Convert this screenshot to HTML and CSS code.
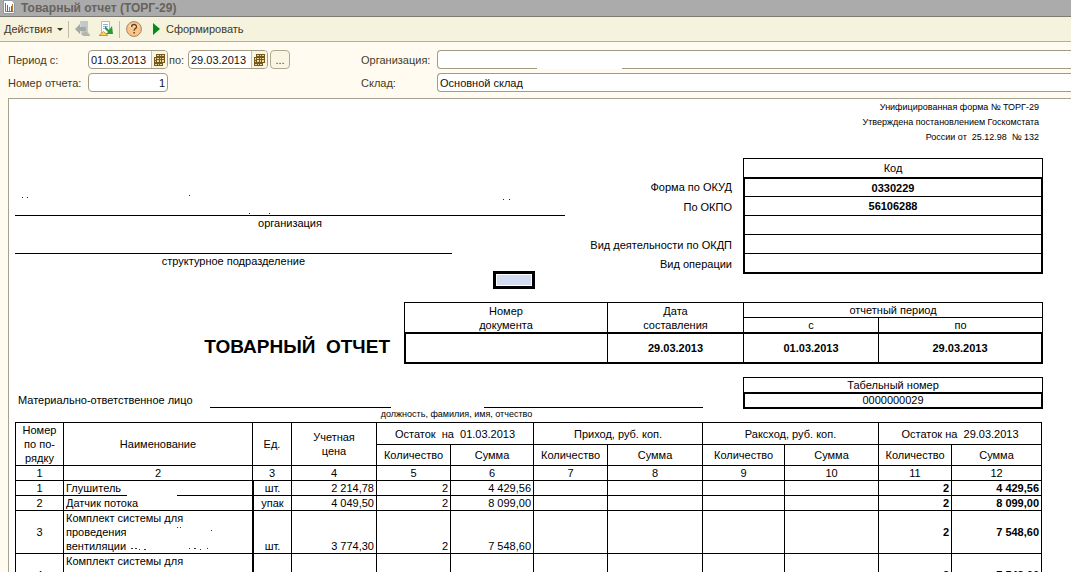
FILE: index.html
```html
<!DOCTYPE html>
<html lang="ru">
<head>
<meta charset="utf-8">
<title>Товарный отчет (ТОРГ-29)</title>
<link rel="stylesheet" href="styles.css">
</head>
<body>
<header class="titlebar">
  <svg class="title-icon" width="14" height="16" viewBox="0 0 14 16" aria-hidden="true">
    <path d="M1.500 0v13.500h11V3L10 .5H1.500" fill="#fdfdfd" stroke="#8d99a8"/>
    <path d="M3.500 3v8.500h8" fill="none" stroke="#6b7480"/>
    <path d="M5.500 5v6M9.500 6v5" stroke="#c8432b"/>
    <path d="M7.500 7v4M10.500 4v7" stroke="#b07a35"/>
  </svg>
  <h1 class="title">Товарный отчет (ТОРГ-29)</h1>
</header>
<nav class="toolbar">
  <button class="tool menu" type="button">Действия<span class="caret"></span></button>
  <span class="divider"></span>
  <button class="tool icon" type="button" aria-label="Загрузить">
    <svg width="16" height="16" viewBox="0 0 16 16"><path d="M5 0h8v11l2 3H6z" fill="#c3c9c8"/><path d="M0 8l5-5v3h6v4H5v3z" fill="#a2a9a7"/><path d="M7 13l3-3 5 4v1H8z" fill="#b2b5ac"/></svg>
  </button>
  <button class="tool icon" type="button" aria-label="Выгрузить">
    <svg width="16" height="16" viewBox="0 0 16 16"><path d="M3.500.5h8v12h-8z" fill="#fff" stroke="#a9bccb"/><path d="M5 3.500h5M5 5.500h5M5 7.500h3" stroke="#8fb3d0"/><path d="M1 14.500l4.500-4 4.500 4z" fill="#f7d65a" stroke="#c79a35"/><path d="M7 5l4 4 3-4 1 8H8l2-2-3-3z" fill="#2a9a35"/></svg>
  </button>
  <span class="divider"></span>
  <button class="tool icon help" type="button" aria-label="Справка">
    <svg width="16" height="16" viewBox="0 0 16 16"><circle cx="8" cy="8" r="7.400" fill="#f8c58a" stroke="#a8845f"/><path d="M3 6a5.500 5.500 0 0 1 10 0z" fill="#fde3c0"/><path d="M5.600 6c0-3.200 5-3.200 5-.3 0 1.800-2.500 1.900-2.500 4" fill="none" stroke="#70401c" stroke-width="1.400"/><path d="M7.400 11h1.500v1.500H7.400z" fill="#70401c"/></svg>
  </button>
  <button class="tool run" type="button"><svg width="7" height="12" viewBox="0 0 7 12" aria-hidden="true"><path d="M0 0l7 6-7 6z" fill="#078a17"/></svg>Сформировать</button>
</nav>
<main class="workspace">
  <form class="params">
    <label for="from">Период с:</label>
    <div class="period">
      <span class="date"><input id="from" type="text" value="01.03.2013"><button type="button" aria-label="Календарь"><svg width="12" height="12" viewBox="0 0 12 12"><path d="M2 0h9v9H9v3H0V3h2z" fill="#75591c"/><path d="M3 1h2v1H3zM6 1h1v1H6zM8 1h2v1H8zM3 4h2v1H3zM6 4h1v1H6zM8 4h2v1H8zM1 4h1v2H1zM3 6h2v2H3zM6 6h1v2H6zM8 6h2v2H8zM1 7h1v1H1zM1 10h2v1H1zM4 10h1v1H4zM6 10h2v1H6z" fill="#e9d89a"/></svg></button></span>
      <label for="to">по:</label>
      <span class="date"><input id="to" type="text" value="29.03.2013"><button type="button" aria-label="Календарь"><svg width="12" height="12" viewBox="0 0 12 12"><path d="M2 0h9v9H9v3H0V3h2z" fill="#75591c"/><path d="M3 1h2v1H3zM6 1h1v1H6zM8 1h2v1H8zM3 4h2v1H3zM6 4h1v1H6zM8 4h2v1H8zM1 4h1v2H1zM3 6h2v2H3zM6 6h1v2H6zM8 6h2v2H8zM1 7h1v1H1zM1 10h2v1H1zM4 10h1v1H4zM6 10h2v1H6z" fill="#e9d89a"/></svg></button></span>
      <button class="more" type="button">...</button>
    </div>
    <label for="org">Организация:</label>
    <span class="org-box"><input class="field wide" id="org" type="text"></span>
    <label for="number">Номер отчета:</label>
    <input class="field number" id="number" type="text" value="1">
    <label for="store">Склад:</label>
    <input class="field wide" id="store" type="text" value="Основной склад">
  </form>

  <article class="sheet">
    <p class="form-note">Унифицированная форма № ТОРГ-29<br>Утверждена постановлением Госкомстата<br>России от  25.12.98  № 132</p>

    <section class="head">
      <div class="parties">
        <p class="line org">организация</p>
        <p class="line unit">структурное подразделение</p>
        <div class="cursor-cell"></div>
        <svg class="specks" width="550" height="24" viewBox="0 0 550 24" aria-hidden="true"><path d="M7 5.500h1M12 5.500h1M174 3.500h1M234 21.500h1M254 21.500h1M488 7.500h1M494 7.500h1" stroke="#222"/></svg>
      </div>
      <table class="codes">
        <colgroup><col class="c-label"><col class="c-code"></colgroup>
        <tr><td></td><th class="top">Код</th></tr>
        <tr><th>Форма по ОКУД</th><td class="first">0330229</td></tr>
        <tr><th>По ОКПО</th><td>56106288</td></tr>
        <tr><th></th><td></td></tr>
        <tr><th>Вид деятельности по ОКДП</th><td></td></tr>
        <tr><th>Вид операции</th><td class="last"></td></tr>
      </table>
    </section>

    <section class="document">
      <h2>ТОВАРНЫЙ  ОТЧЕТ</h2>
      <table class="doc-table">
        <colgroup><col class="d1"><col class="d2"><col class="d3"><col class="d4"></colgroup>
        <tr><th rowspan="2">Номер<br>документа</th><th rowspan="2">Дата<br>составления</th><th colspan="2">отчетный период</th></tr>
        <tr><th>с</th><th>по</th></tr>
        <tr class="values"><td></td><td>29.03.2013</td><td>01.03.2013</td><td>29.03.2013</td></tr>
      </table>
    </section>

    <section class="person">
      <p class="person-label">Материально-ответственное лицо</p>
      <div class="signature">
        <div class="rules"><span class="rule-a"></span><span class="rule-b"></span></div>
        <p>должность, фамилия, имя, отчество</p>
      </div>
      <table class="staff">
        <tr><th>Табельный номер</th></tr>
        <tr><td>0000000029</td></tr>
      </table>
    </section>

    <table class="goods">
      <colgroup><col class="g1"><col class="g2"><col class="g3"><col class="g4"><col class="g5"><col class="g6"><col class="g7"><col class="g8"><col class="g9"><col class="g10"><col class="g11"><col class="g12"></colgroup>
      <thead>
        <tr class="groups"><th rowspan="2">Номер<br>по по-<br>рядку</th><th rowspan="2">Наименование</th><th rowspan="2">Ед.</th><th rowspan="2">Учетная<br>цена</th><th colspan="2">Остаток  на  01.03.2013</th><th colspan="2">Приход, руб. коп.</th><th colspan="2">Раксход, руб. коп.</th><th colspan="2">Остаток на  29.03.2013</th></tr>
        <tr class="subs"><th>Количество</th><th>Сумма</th><th>Количество</th><th>Сумма</th><th>Количество</th><th>Сумма</th><th>Количество</th><th>Сумма</th></tr>
        <tr><th>1</th><th>2</th><th>3</th><th>4</th><th>5</th><th>6</th><th>7</th><th>8</th><th>9</th><th>10</th><th>11</th><th>12</th></tr>
      </thead>
      <tbody>
        <tr><td class="idx">1</td><td class="name erased">Глушитель</td><td class="measure">шт.</td><td>2 214,78</td><td>2</td><td>4 429,56</td><td></td><td></td><td></td><td></td><td class="rest">2</td><td class="rest">4 429,56</td></tr>
        <tr><td class="idx">2</td><td class="name">Датчик потока</td><td class="measure">упак</td><td>4 049,50</td><td>2</td><td>8 099,00</td><td></td><td></td><td></td><td></td><td class="rest">2</td><td class="rest">8 099,00</td></tr>
        <tr><td class="idx">3</td><td class="name">Комплект системы для<br>проведения<br>вентиляции<svg class="name-specks" width="90" height="32" viewBox="0 0 90 32" aria-hidden="true"><path d="M49 .5h1M52 .5h1M83 3.500h1M3 21.500h2M7 21.500h2M11 22.500h1M16 22.500h2M61 21.500h1M66 21.500h2M72 22.500h1M79 21.500h1" stroke="#333"/></svg></td><td class="measure">шт.</td><td>3 774,30</td><td>2</td><td>7 548,60</td><td></td><td></td><td></td><td></td><td class="rest">2</td><td class="rest">7 548,60</td></tr>
        <tr><td class="idx">4</td><td class="name">Комплект системы для<br><br><br></td><td class="measure"></td><td></td><td></td><td></td><td></td><td></td><td></td><td></td><td class="rest">2</td><td class="rest">7 548,60</td></tr>
      </tbody>
    </table>
  </article>
</main>
</body>
</html>
```
FILE: styles.css
```css
* { box-sizing: border-box; }
body {
  margin: 0;
  height: 100vh;
  overflow: hidden;
  display: flex;
  flex-direction: column;
  background: #fffbf0;
  color: #000;
  font: 11px/14px "Liberation Sans", Arial, sans-serif;
}
p, h1, h2 { margin: 0; }
button, input { font: inherit; color: inherit; margin: 0; }
svg { display: block; flex: none; }

.titlebar {
  display: flex;
  align-items: center;
  gap: 5px;
  flex: none;
  height: 17px;
  padding: 0 2px;
  overflow: hidden;
  background: #ababab;
  border-bottom: 1px solid #7d7b73;
}
.title { font: bold 12px/14px "Liberation Sans", Arial, sans-serif; color: #66635f; }

.toolbar {
  display: flex;
  align-items: center;
  flex: none;
  height: 25px;
  padding: 0 4px;
  background: #f5f2dd;
  border-bottom: 1px solid #b5ae98;
  color: #3f3726;
}
.tool { display: flex; align-items: center; padding: 0; border: 0; background: none; }
.menu { justify-content: space-between; width: 59px; }
.icon + .icon { margin-left: 7px; }
.caret { border: 3px solid transparent; border-top-color: #3f3726; border-bottom: 0; }
.divider { width: 1px; height: 17px; margin: 0 6px 0 5px; background: #c2bba0; }
.run { gap: 6px; margin-left: 11px; }

.workspace { flex: 1; min-height: 0; display: flex; flex-direction: column; padding: 8px 0 0 8px; overflow: hidden; }

.params {
  display: grid;
  grid-template-columns: 80px 273px 76px 1fr;
  row-gap: 4px;
  align-items: center;
  flex: none;
  padding-bottom: 6px;
  color: #453c26;
}
.period { display: flex; align-items: center; gap: 1px; }
.period label { width: 18px; }
.date {
  display: flex;
  width: 80px;
  height: 19px;
  overflow: hidden;
  background: #fff;
  border: 1px solid #a39c84;
  border-radius: 4px;
}
.date input { flex: 1; min-width: 0; padding: 0 2px; border: 0; background: none; color: #111; outline: 0; }
.date button {
  display: flex;
  align-items: center;
  justify-content: center;
  width: 16px;
  padding: 0;
  border: 0;
  border-left: 1px solid #c9c2a8;
  background: #f8f5e3;
}
.more { width: 20px; height: 19px; margin-left: 1px; padding: 0; border: 1px solid #b0a98f; border-radius: 4px; background: #f8f5e3; line-height: 12px; }
.field { display: block; height: 19px; padding: 0 2px; border: 1px solid #a39c84; border-radius: 4px; background: #fff; color: #111; }
.field.number { width: 80px; text-align: right; }
.field.wide { width: 100%; border-right: 0; border-radius: 4px 0 0 4px; }
.org-box { position: relative; }
.org-box::after { content: ""; position: absolute; left: 100px; bottom: 0; width: 85px; height: 1px; background: #fff; }

.sheet {
  flex: 1;
  min-height: 0;
  overflow: hidden;
  padding: 1px 28px 0 6px;
  background: #fff;
  border: solid #a5a28f;
  border-width: 1px 0 0 1px;
}
.form-note { padding-right: 4px; text-align: right; white-space: pre-wrap; font-size: 9px; line-height: 15px; }

table { border-collapse: separate; border-spacing: 0; table-layout: fixed; width: 100%; }
th, td { padding: 0; font-weight: normal; line-height: 14px; }

.head { display: grid; grid-template-columns: 560fr 468fr; margin-top: 13px; }
.parties { position: relative; padding-top: 57px; }
.line { border-top: 1px solid #000; line-height: 15px; text-align: center; }
.org { margin-right: 10px; }
.unit { width: 78%; margin-top: 22px; }
.cursor-cell { width: 42px; height: 18px; margin: 2px 0 0 478px; border: 3px solid #000; background: #d3dbf1; box-shadow: inset 0 0 0 1px #fff; }
.specks { position: absolute; left: 0; top: 34px; }

.codes { align-self: start; }
.c-label { width: 168px; }
.c-code { width: 300px; }
.codes th { padding-right: 11px; height: 19px; text-align: right; }
.codes th.top { padding: 0; border: 1px solid #000; border-bottom: 0; text-align: center; }
.codes td + td, .codes th + td { height: 19px; border: solid #000; border-width: 0 2px 1px; text-align: center; font-weight: bold; }
.codes td.first { height: 20px; border-top-width: 2px; }
.codes td.last { height: 20px; border-bottom-width: 2px; }

.document { display: grid; grid-template-columns: 389fr 639fr; margin-top: 13px; }
.document h2 { align-self: end; padding: 0 14px 6px 0; text-align: right; white-space: pre; font-size: 19px; line-height: 22px; }
.d1 { width: 204px; }
.d2 { width: 136px; }
.d3 { width: 135px; }
.d4 { width: 164px; }
.doc-table th { height: 15px; border: solid #000; border-width: 1px 1px 0 0; text-align: center; }
.doc-table tr:first-child th:first-child { border-left-width: 1px; }
.doc-table td { height: 32px; border: solid #000; border-width: 2px 1px 2px 0; text-align: center; font-weight: bold; }
.doc-table td:first-child { border-left-width: 2px; }
.doc-table td:last-child { border-right-width: 2px; }

.person { display: grid; grid-template-columns: 195fr 493fr 40fr 300fr; margin-top: 13px; }
.person-label { padding: 16px 0 0 3px; white-space: nowrap; }
.signature { padding-top: 30px; text-align: center; font-size: 9px; line-height: 12px; }
.rules { display: grid; grid-template-columns: 181fr 219fr; column-gap: 93px; height: 1px; }
.rules span { background: #000; }
.staff { grid-column: 4; align-self: start; text-align: center; }
.staff th { height: 15px; border: 1px solid #000; border-bottom: 0; }
.staff td { height: 17px; border: 2px solid #000; line-height: 13px; }

.goods { width: calc(100% - 1px); margin-top: 2px; border: solid #000; border-width: 1px 0 0 1px; }
.g1 { width: 48px; }
.g2 { width: 189px; }
.g3 { width: 39px; }
.g4 { width: 85px; }
.g5, .g7 { width: 74px; }
.g6 { width: 83px; }
.g8 { width: 95px; }
.g9 { width: 82px; }
.g10 { width: 94px; }
.g11 { width: 73px; }
.g12 { width: 90px; }
.goods th, .goods td { border: solid #000; border-width: 0 1px 1px 0; }
.goods th { height: 15px; text-align: center; white-space: pre; }
.goods .groups th { height: 22px; }
.goods .subs th { height: 21px; }
.goods td { padding-right: 2px; text-align: right; vertical-align: bottom; }
.goods .idx { padding: 0; text-align: center; vertical-align: middle; }
.goods .name { position: relative; padding-left: 2px; text-align: left; }
.goods .measure { padding: 0; text-align: center; border-left-width: 1px; }
.goods .rest { font-weight: bold; vertical-align: middle; }
.erased::after { content: ""; position: absolute; left: 63px; bottom: -1px; width: 50px; height: 1px; background: #fff; }
.name-specks { position: absolute; left: 64px; top: 16px; }
```
